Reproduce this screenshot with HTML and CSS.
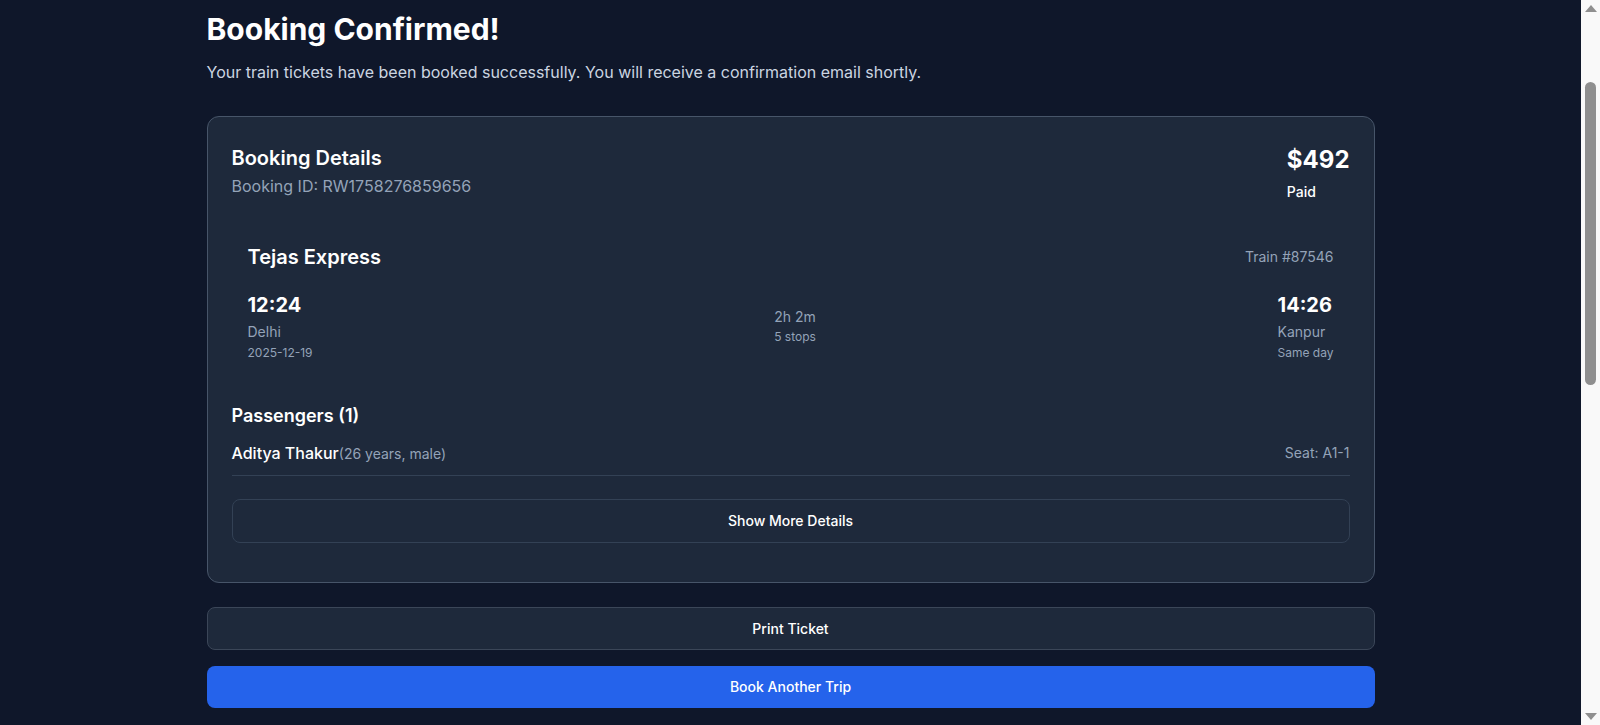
FILE: index.html
```html
<!DOCTYPE html>
<html lang="en">
<head>
<meta charset="utf-8">
<title>Booking Confirmed</title>
<link rel="stylesheet" href="styles.css">
</head>
<body>
<main class="page">
  <div class="container">
    <h1 class="title">Booking Confirmed!</h1>
    <p class="subtitle">Your train tickets have been booked successfully. You will receive a confirmation email shortly.</p>

    <section class="card">
      <div class="card-head">
        <div>
          <h2 class="card-title">Booking Details</h2>
          <p class="booking-id">Booking ID: RW1758276859656</p>
        </div>
        <div class="price-block">
          <div class="price">$492</div>
          <div class="paid">Paid</div>
        </div>
      </div>

      <div class="train">
        <div class="train-head">
          <h3 class="train-name">Tejas Express</h3>
          <span class="train-no">Train #87546</span>
        </div>
        <div class="journey">
          <div class="stop">
            <div class="time">12:24</div>
            <div class="city">Delhi</div>
            <div class="date">2025-12-19</div>
          </div>
          <div class="mid">
            <div class="duration">2h 2m</div>
            <div class="stops">5 stops</div>
          </div>
          <div class="stop">
            <div class="time">14:26</div>
            <div class="city">Kanpur</div>
            <div class="date">Same day</div>
          </div>
        </div>
      </div>

      <h3 class="section-title">Passengers (1)</h3>
      <div class="passenger">
        <div><span class="p-name">Aditya Thakur</span><span class="p-meta">(26 years, male)</span></div>
        <span class="seat">Seat: A1-1</span>
      </div>

      <button class="btn btn-outline btn-more">Show More Details</button>
    </section>

    <div class="actions">
      <button class="btn btn-outline btn-print">Print Ticket</button>
      <button class="btn btn-primary">Book Another Trip</button>
    </div>
  </div>
</main>

<div class="scrollbar" aria-hidden="true">
  <div class="sb-btn"><span class="sb-arrow sb-up"></span></div>
  <div class="sb-track"><div class="sb-thumb"></div></div>
  <div class="sb-btn"><span class="sb-arrow sb-down"></span></div>
</div>
</body>
</html>
```

FILE: styles.css
```css
* { box-sizing: border-box; }
html, body { margin: 0; padding: 0; }
html { background: #0f172a; }
body {
  background: #0f172a;
  color: #ffffff;
  font-family: Inter, "Noto Sans", "Liberation Sans", sans-serif;
  padding-right: 19px;
}

.page {
  padding: 11px 16px 40px;
}
.container {
  max-width: 1168px;
  margin: 0 auto;
}
.title {
  margin: 0 0 13px;
  font-size: 30px;
  line-height: 36px;
  font-weight: 700;
}
.subtitle {
  margin: 0 0 32px;
  font-size: 16px;
  line-height: 24px;
  color: #cbd5e1;
}
.card {
  background: #1e293b;
  border: 1px solid #475569;
  border-radius: 12px;
  padding: 27px 24px 24px;
}
.card-head {
  display: flex;
  justify-content: space-between;
  align-items: flex-start;
  margin-bottom: 25px;
}
.card-title {
  margin: 0;
  font-size: 20px;
  line-height: 28px;
  font-weight: 600;
}
.booking-id {
  margin: 2px 0 0;
  font-size: 16px;
  line-height: 24px;
  color: #94a3b8;
}
.price {
  font-size: 24px;
  line-height: 32px;
  font-weight: 700;
}
.paid {
  margin-top: 6px;
  font-size: 14px;
  line-height: 20px;
  font-weight: 500;
}
.train {
  padding: 16px;
  margin-bottom: 25px;
}
.train-head {
  display: flex;
  justify-content: space-between;
  align-items: center;
}
.train-name {
  margin: 0;
  font-size: 20px;
  line-height: 28px;
  font-weight: 600;
}
.train-no {
  font-size: 14px;
  line-height: 20px;
  color: #94a3b8;
}
.journey {
  margin-top: 20px;
  display: flex;
  justify-content: space-between;
  align-items: center;
}
.time {
  font-size: 20px;
  line-height: 28px;
  font-weight: 700;
}
.city {
  margin-top: 3px;
  font-size: 14px;
  line-height: 20px;
  color: #94a3b8;
}
.date {
  margin-top: 3px;
  font-size: 12px;
  line-height: 16px;
  color: #94a3b8;
}
.mid { text-align: center; }
.duration {
  font-size: 14px;
  line-height: 20px;
  color: #94a3b8;
}
.stops {
  margin-top: 2px;
  font-size: 12px;
  line-height: 16px;
  color: #94a3b8;
}
.section-title {
  margin: 0 0 11px;
  font-size: 18px;
  line-height: 28px;
  font-weight: 600;
}
.passenger {
  display: flex;
  justify-content: space-between;
  align-items: center;
  padding-bottom: 10px;
  border-bottom: 1px solid #334155;
  margin-bottom: 23px;
}
.p-name {
  font-size: 16px;
  line-height: 24px;
  font-weight: 500;
}
.p-meta, .seat {
  font-size: 14px;
  line-height: 20px;
  color: #94a3b8;
}
.btn {
  display: block;
  width: 100%;
  font-family: inherit;
  font-size: 14px;
  line-height: 20px;
  font-weight: 500;
  color: #ffffff;
  border-radius: 8px;
  cursor: pointer;
  text-align: center;
}
.btn-outline {
  background: #1e293b;
  border: 1px solid #334155;
}
.btn-more {
  padding: 11px 16px;
  margin-bottom: 15px;
}
.actions {
  margin-top: 24px;
  display: flex;
  flex-direction: column;
  gap: 16px;
}
.btn-print { padding: 10.5px 16px; border-color: #3b4658; }
.btn-primary {
  background: #2563eb;
  border: none;
  padding: 11px 16px;
}

/* browser scrollbar (overlay at the right edge of the window) */
.scrollbar {
  position: fixed;
  top: 0;
  right: 0;
  width: 19px;
  height: 100vh;
  background: #f9f9f9;
  display: flex;
  flex-direction: column;
}
.sb-btn {
  height: 17px;
  display: flex;
  align-items: center;
  justify-content: center;
}
.sb-arrow {
  width: 0;
  height: 0;
  border-left: 6px solid transparent;
  border-right: 6px solid transparent;
}
.sb-up { border-bottom: 7px solid #8f8f8f; }
.sb-down { border-top: 7px solid #8f8f8f; }
.sb-track {
  flex: 1;
  display: flex;
  justify-content: center;
}
.sb-thumb {
  width: 11px;
  height: 303px;
  margin-top: 65px;
  border-radius: 6px;
  background: #8f8f8f;
}
```
